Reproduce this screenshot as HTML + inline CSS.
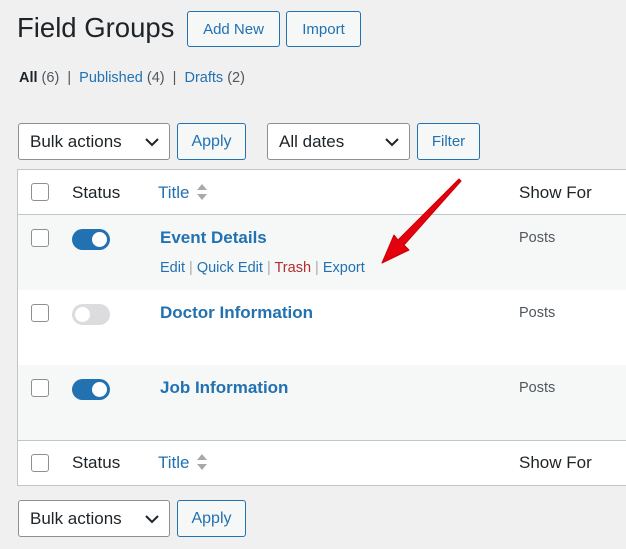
<!DOCTYPE html>
<html><head><style>
body{margin:0;width:626px;height:549px;background:#f0f0f1;font-family:"Liberation Sans",sans-serif;color:#1d2327;position:relative;overflow:hidden}
.a{position:absolute}
.btn{position:absolute;border:1px solid #2271b1;border-radius:3px;color:#2271b1;background:#f6f7f7;font-size:15px;display:flex;align-items:center;justify-content:center;box-sizing:border-box}
.sel{position:absolute;border:1px solid #8c8f94;border-radius:3px;background:#fff;font-size:17px;box-sizing:border-box;padding-left:11px;display:flex;align-items:center}
.sel svg{position:absolute;right:10px;top:14px}
.cb{position:absolute;width:18px;height:18px;border:1px solid #8c8f94;border-radius:3px;background:#fff;box-sizing:border-box}
.tg{position:absolute;width:38px;height:21px;border-radius:11px}
.tg i{position:absolute;top:3px;width:15px;height:15px;border-radius:50%;background:#fff}
.link{color:#2271b1}
</style></head><body>
<div class="a" style="left:17px;top:12px;font-size:27.5px">Field Groups</div>
<div class="btn" style="left:187px;top:11px;width:93px;height:36px">Add New</div>
<div class="btn" style="left:286px;top:11px;width:75px;height:36px">Import</div>
<div class="a" style="left:19px;top:70px;font-size:14.5px;color:#50575e"><b style="color:#1d2327">All</b> (6) &nbsp;| &nbsp;<span class="link">Published</span> (4) &nbsp;| &nbsp;<span class="link">Drafts</span> (2)</div>
<div class="sel" style="left:18px;top:123px;width:152px;height:37px">Bulk actions<svg width="14" height="9"><path d="M1 1l6 6 6-6" stroke="#1d2327" stroke-width="2" fill="none"/></svg></div>
<div class="btn" style="left:177px;top:123px;width:69px;height:37px;font-size:16px">Apply</div>
<div class="sel" style="left:267px;top:123px;width:143px;height:37px">All dates<svg width="14" height="9"><path d="M1 1l6 6 6-6" stroke="#1d2327" stroke-width="2" fill="none"/></svg></div>
<div class="btn" style="left:417px;top:123px;width:63px;height:37px">Filter</div>
<div class="a" style="left:17px;top:169px;width:620px;height:317px;border:1px solid #c3c4c7;background:#fff;box-sizing:border-box"></div>
<div class="a" style="left:18px;top:214px;width:620px;height:1px;background:#c3c4c7"></div>
<div class="a" style="left:18px;top:215px;width:620px;height:75px;background:#f6f7f7"></div>
<div class="a" style="left:18px;top:365px;width:620px;height:75px;background:#f6f7f7"></div>
<div class="a" style="left:18px;top:440px;width:620px;height:1px;background:#c3c4c7"></div>
<div class="cb" style="left:31px;top:183px"></div>
<div class="a" style="left:72px;top:183px;font-size:17px">Status</div>
<div class="a link" style="left:158px;top:183px;font-size:17px">Title</div>
<svg class="a" style="left:196px;top:182px" width="12" height="20"><path d="M1 8L6 2 11 8z M1 12L6 18 11 12z" fill="#a7aaad"/></svg>
<div class="a" style="left:519px;top:183px;font-size:17px">Show For</div>
<div class="cb" style="left:31px;top:229px"></div>
<div class="tg" style="left:72px;top:229px;background:#2271b1"><i style="left:20px"></i></div>
<div class="a link" style="left:160px;top:228px;font-size:17px;font-weight:bold">Event Details</div>
<div class="a" style="left:160px;top:260px;font-size:14.5px;color:#a7aaad"><span class="link">Edit</span> | <span class="link">Quick Edit</span> | <span style="color:#b32d2e">Trash</span> | <span class="link">Export</span></div>
<div class="a" style="left:519px;top:230px;font-size:14.5px;color:#50575e">Posts</div>
<div class="cb" style="left:31px;top:304px"></div>
<div class="tg" style="left:72px;top:304px;background:#dcdcde"><i style="left:3px"></i></div>
<div class="a link" style="left:160px;top:303px;font-size:17px;font-weight:bold">Doctor Information</div>
<div class="a" style="left:519px;top:305px;font-size:14.5px;color:#50575e">Posts</div>
<div class="cb" style="left:31px;top:379px"></div>
<div class="tg" style="left:72px;top:379px;background:#2271b1"><i style="left:20px"></i></div>
<div class="a link" style="left:160px;top:378px;font-size:17px;font-weight:bold">Job Information</div>
<div class="a" style="left:519px;top:380px;font-size:14.5px;color:#50575e">Posts</div>
<div class="cb" style="left:31px;top:454px"></div>
<div class="a" style="left:72px;top:453px;font-size:17px">Status</div>
<div class="a link" style="left:158px;top:453px;font-size:17px">Title</div>
<svg class="a" style="left:196px;top:452px" width="12" height="20"><path d="M1 8L6 2 11 8z M1 12L6 18 11 12z" fill="#a7aaad"/></svg>
<div class="a" style="left:519px;top:453px;font-size:17px">Show For</div>
<div class="sel" style="left:18px;top:500px;width:152px;height:37px">Bulk actions<svg width="14" height="9"><path d="M1 1l6 6 6-6" stroke="#1d2327" stroke-width="2" fill="none"/></svg></div>
<div class="btn" style="left:177px;top:500px;width:69px;height:37px;font-size:16px">Apply</div>
<svg class="a" style="left:0;top:0" width="626" height="549"><polygon points="461,181 404,245 409,250 382,263 394,235 398,240 459,179" fill="#e3000f" stroke="#c00" stroke-width="1" stroke-linejoin="round"/></svg>
</body></html>
